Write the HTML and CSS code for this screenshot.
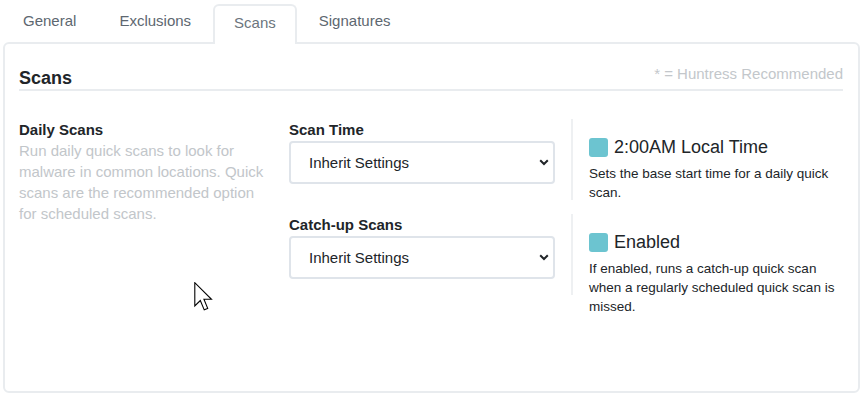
FILE: index.html
```html
<!DOCTYPE html>
<html lang="en">
<head>
<meta charset="utf-8">
<title>Scans</title>
<link rel="stylesheet" href="styles.css">
</head>
<body>
<div class="page">
  <nav class="tabs">
    <a class="tab">General</a>
    <a class="tab">Exclusions</a>
    <a class="tab active">Scans</a>
    <a class="tab">Signatures</a>
  </nav>
  <section class="panel">
    <header class="panel-head">
      <h2>Scans</h2>
      <span class="hint">* = Huntress Recommended</span>
    </header>
    <div class="panel-body">
      <div class="intro">
        <h3>Daily Scans</h3>
        <p>Run daily quick scans to look for malware in common locations. Quick scans are the recommended option for scheduled scans.</p>
      </div>
      <div class="settings">
        <div class="field">
          <label>Scan Time</label>
          <div class="select-wrap">
            <select><option>Inherit Settings</option></select>
            <svg class="chev" width="10" height="7" viewBox="0 0 10 7"><path d="M1.2 1.2 L5 5 L8.8 1.2" fill="none" stroke="#212529" stroke-width="2"/></svg>
          </div>
        </div>
        <div class="info">
          <div class="info-title"><span class="swatch"></span>2:00AM Local Time</div>
          <p>Sets the base start time for a daily quick scan.</p>
        </div>
        <div class="field">
          <label>Catch-up Scans</label>
          <div class="select-wrap">
            <select><option>Inherit Settings</option></select>
            <svg class="chev" width="10" height="7" viewBox="0 0 10 7"><path d="M1.2 1.2 L5 5 L8.8 1.2" fill="none" stroke="#212529" stroke-width="2"/></svg>
          </div>
        </div>
        <div class="info">
          <div class="info-title"><span class="swatch"></span>Enabled</div>
          <p>If enabled, runs a catch-up quick scan when a regularly scheduled quick scan is missed.</p>
        </div>
      </div>
    </div>
  </section>
  <svg class="cursor" width="19" height="29" viewBox="0 0 13 20"><path d="M0.5 0.5 V16.5 L4.3 12.8 L7 19.2 L9.4 18.2 L6.8 11.9 H12 Z" fill="#fff" stroke="#000" stroke-width="0.75" stroke-linejoin="miter"/></svg>
</div>
</body>
</html>
```
FILE: styles.css
```css
html, body {
  margin: 0;
  background: #fff;
}
body {
  font-family: "Liberation Sans", Arial, sans-serif;
}
.page {
  position: relative;
  width: 867px;
  height: 398px;
  box-sizing: border-box;
  padding: 4px 0 0 2px;
}
.tabs {
  display: flex;
  gap: 1px;
  position: relative;
  z-index: 1;
  margin-bottom: -2px;
}
.tab {
  display: block;
  font-size: 15px;
  line-height: 20px;
  padding: 5px 19px 13px;
  border: 2px solid transparent;
  border-bottom: 0;
  border-radius: 6px 6px 0 0;
  color: #5d6770;
}
.tab.active {
  padding: 7px 19px 11px;
  border-color: #e9ecef;
  background: #fff;
  color: #6c757d;
}
.panel {
  margin-left: 1px;
  width: 857px;
  height: 351px;
  box-sizing: border-box;
  border: 2px solid #e9ecef;
  border-radius: 6px;
  padding: 19px 15px 0 14px;
}
.panel-head {
  display: flex;
  justify-content: space-between;
  align-items: flex-start;
  border-bottom: 2px solid #e9ecef;
}
.panel-head h2 {
  margin: 5px 0 0;
  font-size: 18px;
  line-height: 21px;
  font-weight: bold;
  color: #212529;
}
.hint {
  font-size: 15px;
  line-height: 21px;
  color: #c3c7cb;
}
.panel-body {
  display: flex;
  margin-top: 28px;
}
.intro {
  width: 252px;
  margin-right: 18px;
}
.intro h3 {
  margin: 0;
  font-size: 15px;
  line-height: 21px;
  font-weight: bold;
  color: #212529;
}
.intro p {
  margin: 0;
  font-size: 15px;
  line-height: 21px;
  color: #c2c6ca;
}
.settings {
  display: grid;
  grid-template-columns: 266px 272px;
  grid-auto-rows: 81px;
  column-gap: 16px;
  row-gap: 14px;
}
.field label {
  display: block;
  font-size: 15px;
  line-height: 21px;
  font-weight: bold;
  color: #212529;
  margin-bottom: 1px;
}
.select-wrap {
  position: relative;
}
.select-wrap select {
  display: block;
  width: 266px;
  height: 43px;
  box-sizing: border-box;
  border: 2px solid #dfe4ea;
  border-radius: 4px;
  padding: 0 30px 0 18px;
  font-family: "Liberation Sans", Arial, sans-serif;
  font-size: 15px;
  color: #212529;
  background: #fff;
  appearance: none;
  -webkit-appearance: none;
}
.chev {
  position: absolute;
  right: 6px;
  top: 18px;
}
.info {
  border-left: 2px solid #eef0f2;
  padding: 17px 0 0 16px;
}
.info-title {
  display: flex;
  align-items: center;
  gap: 6px;
  font-size: 18px;
  line-height: 23px;
  color: #212529;
}
.swatch {
  width: 19px;
  height: 19px;
  border-radius: 3px;
  background: #6cc4d0;
}
.info p {
  margin: 5px 0 0;
  font-size: 13.5px;
  line-height: 19px;
  color: #212529;
}
.cursor {
  position: absolute;
  left: 194px;
  top: 282px;
}
```
